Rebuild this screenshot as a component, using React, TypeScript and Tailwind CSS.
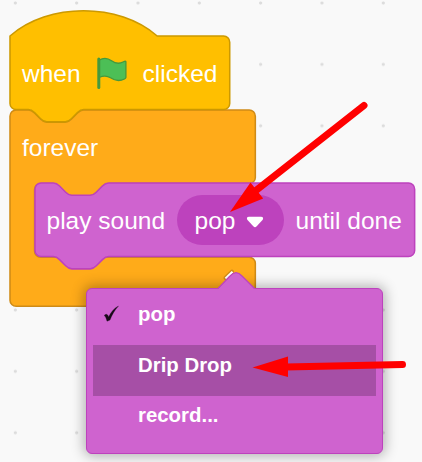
import type { ReactNode } from "react";

const NOTCH_RIGHT = "c 2,0 3,1 4,2 l 4,4 c 1,1 2,2 4,2 h 12 c 2,0 3,-1 4,-2 l 4,-4 c 1,-1 2,-2 4,-2";
const NOTCH_LEFT = "c -2,0 -3,1 -4,2 l -4,4 c -1,1 -2,2 -4,2 h -12 c -2,0 -3,-1 -4,-2 l -4,-4 c -1,-1 -2,-2 -4,-2";

const HAT = `M 0,0 c 25,-22 71,-22 96,0 H 139.3 a 4,4 0 0,1 4,4 V 44 a 4,4 0 0,1 -4,4 H 48 ${NOTCH_LEFT} H 4 a 4,4 0 0,1 -4,-4 z`;
const LOOP = `M 0,4 A 4,4 0 0,1 4,0 H 12 ${NOTCH_RIGHT} H 156 a 4,4 0 0,1 4,4 V 44 a 4,4 0 0,1 -4,4 H 64 ${NOTCH_LEFT} H 20 a 4,4 0 0,0 -4,4 V 92 a 4,4 0 0,0 4,4 H 156 a 4,4 0 0,1 4,4 V 124 a 4,4 0 0,1 -4,4 H 4 a 4,4 0 0,1 -4,-4 z`;
const STACK = `M 0,4 A 4,4 0 0,1 4,0 H 12 ${NOTCH_RIGHT} H 243.6 a 4,4 0 0,1 4,4 V 44 a 4,4 0 0,1 -4,4 H 48 ${NOTCH_LEFT} H 4 a 4,4 0 0,1 -4,-4 z`;

function Block({ path, colors, place, children }: { path: string; colors: string; place: string; children: ReactNode }) {
  return (
    <section className={`absolute h-[73.6px] ${place}`}>
      <svg className="absolute inset-0 size-px overflow-visible" aria-hidden="true">
        <path d={path} transform="scale(1.5333)" className={colors} strokeWidth="1" />
      </svg>
      <div className="relative flex h-full items-center whitespace-nowrap pl-3 text-[24.5px] leading-7">{children}</div>
    </section>
  );
}

function Flag() {
  return (
    <svg className="ml-[16px] mr-[16px] h-8 w-[30px] shrink-0" viewBox="0 0 30 32" aria-hidden="true">
      <path d="M2 3.3C6 .8 11 1.2 14.5 3.8C19 7 23 6.6 26 5C28.2 3.9 28.9 3.7 28.9 5V20.5Q28.9 21.3 27.5 22C22 24.7 17.5 23.5 13.5 20.8C9.5 18.3 6 18.8 2 20.5Z" fill="#4cbf56" stroke="#45993d" strokeWidth="1.3" strokeLinejoin="round" />
      <path d="M1.8 2V30.5" stroke="#45993d" strokeWidth="3" strokeLinecap="round" />
    </svg>
  );
}

function Menu() {
  return (
    <div className="absolute left-[86px] top-[288px] h-[166px] w-[297px] rounded-[6px] border border-[#bd42bd] bg-[#cf63cf] px-1.5 text-[20.4px] font-bold shadow-[0_0_13px_2px_rgba(0,0,0,0.3)]">
      <svg className="absolute left-[130px] top-[-18px] h-5 w-10" viewBox="0 0 40 20" aria-hidden="true">
        <path d="M1 18L13 5C17 .5 21 .5 25 5L38 18V20H1Z" fill="#cf63cf" />
        <path d="M1 17.5L13 5C17 .5 21 .5 25 5L37.5 17.5" fill="none" stroke="#bd42bd" strokeWidth="1.2" />
      </svg>
      <ul className="pt-[5.5px]">
        <li className="flex h-[50.5px] items-center">
          <span className="flex w-[45px] pl-2.5">
            <svg className="mb-[11px] h-[18px] w-[17px]" viewBox="0 0 17 18" aria-hidden="true">
              <path d="M1.2 10.5C3 8.5 4.8 9 5.6 12C8 7.2 11 3 15.5 1C11.5 5.5 9 9.5 7 15L4 16.2C3.2 13.4 2.8 11.5 1.2 10.5Z" fill="#180a18" stroke="#180a18" strokeWidth=".3" />
            </svg>
          </span>
          <span className="mb-[11px]">pop</span>
        </li>
        <li className="flex h-[50.5px] items-center bg-[#a64fa6] pl-[45px]"><span className="mb-[9.5px]">Drip Drop</span></li>
        <li className="flex h-[50px] items-center pl-[45px]"><span className="mb-[11px]">record...</span></li>
      </ul>
    </div>
  );
}

export default function App() {
  return (
    <main className="relative h-[462px] w-[422px] overflow-hidden bg-[#f9f9f9] font-['Liberation_Sans',Arial,sans-serif] text-white">
      <div className="absolute inset-0 bg-[radial-gradient(circle_at_15.3px_3px,#dcdcdc_1.2px,transparent_1.9px)] bg-[size:61.33px_61.4px]" />
      <Block path={LOOP} colors="fill-[#ffab19] stroke-[#cf8b17]" place="left-[10px] top-[109.5px] w-[245px]">
        <span className="mt-[3px]">forever</span>
      </Block>
      <Block path={HAT} colors="fill-[#ffbf00] stroke-[#cc9900]" place="left-[10px] top-[35.9px] w-[220px]">
        <span className="mt-0.5">when</span>
        <Flag />
        <span className="mt-0.5">clicked</span>
      </Block>
      <svg className="absolute left-[222px] top-[267px] h-5 w-4" viewBox="0 0 16 20" aria-hidden="true">
        <path d="M3.5 11L10 4.7" stroke="#cf8b17" strokeWidth="4" strokeLinecap="round" />
        <path d="M3.5 11.5L10.5 4.8" stroke="white" strokeWidth="2.2" />
      </svg>
      <Menu />
      <Block path={STACK} colors="fill-[#cf63cf] stroke-[#bd42bd]" place="left-[34.5px] top-[183.3px] w-[380px]">
        <span className="mt-0.5 w-[118px]">play sound</span>
        <div className="ml-[12.5px] mr-[11.5px] flex h-[50px] w-[107px] shrink-0 items-center rounded-full bg-[#bd42bd] pl-[17.5px]">
          <span className="mt-0.5">pop</span>
          <svg className="ml-[11px] mt-[3px] h-3 w-[18px]" viewBox="0 0 18 12" aria-hidden="true">
            <path d="M3 .8H15C17.2 .8 17.6 2.7 16.5 4L10.7 10.3Q9 12 7.3 10.3L1.5 4C.4 2.7 .8 .8 3 .8Z" fill="white" />
          </svg>
        </div>
        <span className="mt-0.5">until done</span>
      </Block>
      <svg className="pointer-events-none absolute inset-0 h-[462px] w-[422px]" viewBox="0 0 422 462" fill="red" stroke="red" aria-hidden="true">
        <path d="M364 105.5L254 192" strokeWidth="7" strokeLinecap="round" />
        <path d="M230 212L250.5 182.5L263.2 198.5Z" stroke="none" />
        <path d="M402.5 364.5L286 367" strokeWidth="7" strokeLinecap="round" />
        <path d="M252.5 367.5L288 356.5V377Z" stroke="none" />
      </svg>
    </main>
  );
}
